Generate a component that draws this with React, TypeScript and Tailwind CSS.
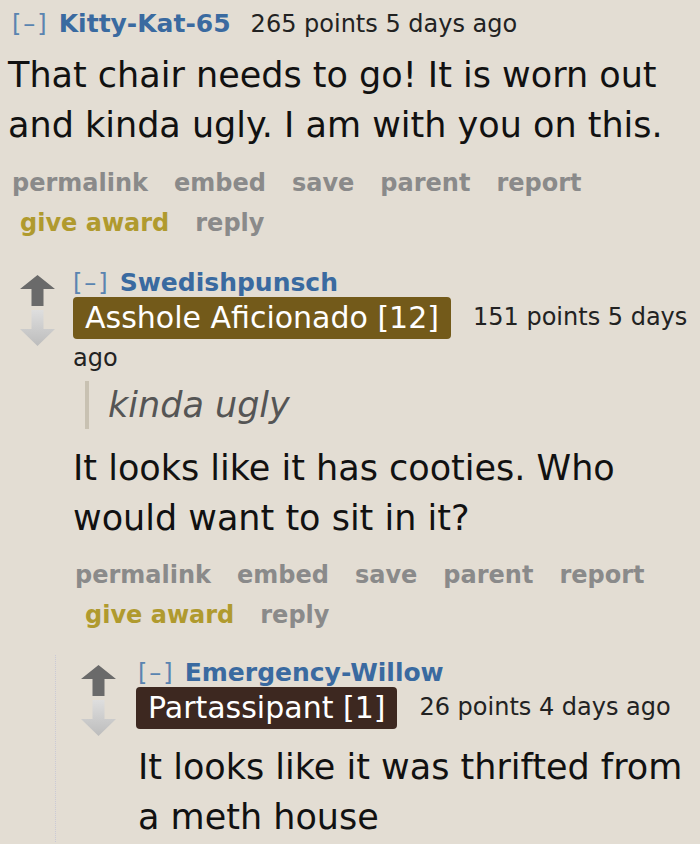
const font = "font-['DejaVu_Sans','Liberation_Sans',sans-serif]";

const Arrows = () => (
  <div className="flex flex-col items-center w-[35px] shrink-0 pt-[6px]">
    <svg width="35" height="31" viewBox="0 0 35 31">
      <polygon points="17.5,0 35,14 23.5,14 23.5,31 11.5,31 11.5,14 0,14" fill="#6a6a6a" />
    </svg>
    <svg width="35" height="36" viewBox="0 0 35 36" className="mt-[4px]">
      <defs>
        <linearGradient id="dg" x1="0" y1="0" x2="0" y2="1">
          <stop offset="0" stopColor="#dedede" />
          <stop offset="1" stopColor="#bcbcbc" />
        </linearGradient>
      </defs>
      <polygon points="11.5,0 23.5,0 23.5,19 35,19 17.5,36 0,19 11.5,19" fill="url(#dg)" />
    </svg>
  </div>
);

const Links = ({ indent }: { indent: string }) => (
  <div className="font-bold text-[24px] text-[#8a8a8a] leading-[40px]">
    <div className="flex gap-[26px]">
      <span>permalink</span>
      <span>embed</span>
      <span>save</span>
      <span>parent</span>
      <span>report</span>
    </div>
    <div className={`flex gap-[26px] ${indent}`}>
      <span className="text-[#b09a2e]">give award</span>
      <span>reply</span>
    </div>
  </div>
);

const Collapse = () => (
  <span className="font-normal text-[#5a84b0] tracking-[2px] mr-[10px]">[–]</span>
);

export default function App() {
  return (
    <div className={`min-h-screen bg-[#e3ddd3] ${font} text-[#111]`}>
      {/* top comment */}
      <div className="pl-[12px] pt-[9px]">
        <div className="text-[24px] leading-[30px] text-[#222]">
          <Collapse />
          <span className="font-bold text-[25px] text-[#3a6aa0]">Kitty-Kat-65</span>
          <span className="ml-[20px]">265 points 5 days ago</span>
        </div>
        <div className="text-[35px] leading-[50px] -ml-[4px] mt-[11px]">
          That chair needs to go! It is worn out
          <br />
          and kinda ugly. I am with you on this.
        </div>
        <div className="mt-[13px]">
          <Links indent="pl-[8px]" />
        </div>
      </div>

      {/* reply */}
      <div className="mt-[26px]">
        <div className="flex pl-[20px] gap-[18px]">
          <Arrows />
          <div className="flex-1">
            <div className="text-[24px] leading-[28px]">
              <Collapse />
              <span className="font-bold text-[25px] text-[#3a6aa0]">Swedishpunsch</span>
            </div>
            <div className="text-[24px] leading-[38px] text-[#222]">
              <span className="inline-block bg-[#735a1a] text-white text-[30px] leading-[42px] px-[12px] rounded-[4px] mr-[22px] align-middle">
                Asshole Aficionado [12]
              </span>
              151 points 5 days ago
            </div>
            <div className="mt-[4px] ml-[12px] border-l-[4px] border-[#c8c1b2] pl-[19px] italic text-[35px] leading-[48px] text-[#555]">
              kinda ugly
            </div>
            <div className="text-[35px] leading-[50px] mt-[14px]">
              It looks like it has cooties. Who
              <br />
              would want to sit in it?
            </div>
            <div className="mt-[12px] pl-[2px]">
              <Links indent="pl-[10px]" />
            </div>
          </div>
        </div>

        {/* nested reply */}
        <div className="ml-[55px] mt-[20px] border-l border-dotted border-[#c9c9d6] pt-[4px]">
          <div className="flex pl-[25px] gap-[22px]">
            <Arrows />
            <div className="flex-1">
              <div className="text-[24px] leading-[28px]">
                <Collapse />
                <span className="font-bold text-[25px] text-[#3a6aa0]">Emergency-Willow</span>
              </div>
              <div className="text-[24px] leading-[38px] text-[#222] -ml-[2px]">
                <span className="inline-block bg-[#3d2820] text-white text-[30px] leading-[42px] px-[12px] rounded-[4px] mr-[22px] align-middle">
                  Partassipant [1]
                </span>
                26 points 4 days ago
              </div>
              <div className="text-[35px] leading-[50px] mt-[13px]">
                It looks like it was thrifted from
                <br />
                a meth house
              </div>
            </div>
          </div>
        </div>
      </div>
    </div>
  );
}
